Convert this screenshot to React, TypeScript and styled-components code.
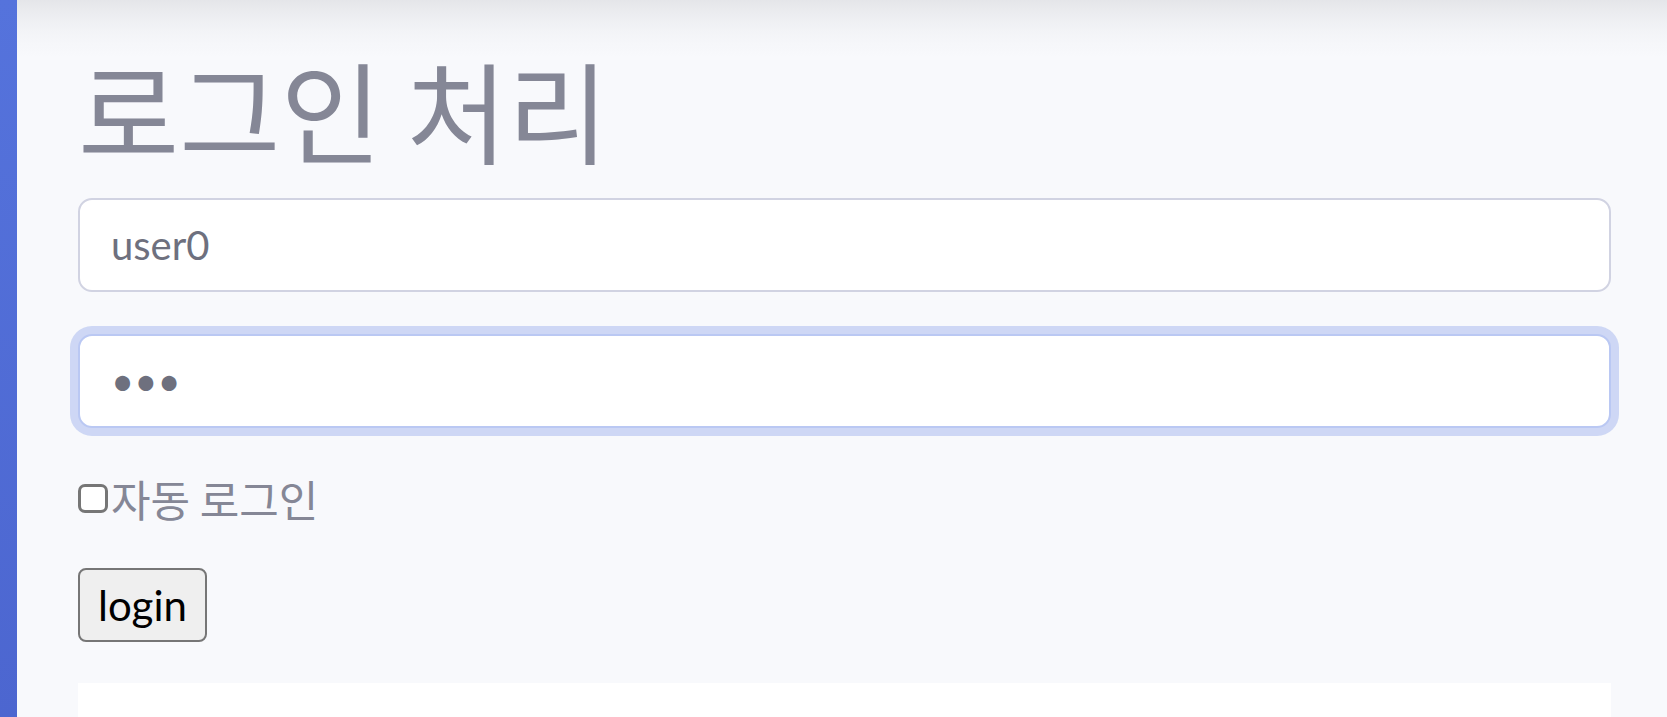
import React from "react";
import styled, { createGlobalStyle } from "styled-components";

const Global = createGlobalStyle`
  html, body, #root { margin: 0; padding: 0; height: 100%; }
  body {
    overflow: hidden;
    background: #f8f9fc;
    font-family: "Lato", "Noto Sans CJK KR", sans-serif;
  }
  * { box-sizing: border-box; }
`;

const Wrapper = styled.div`
  display: flex;
  min-height: 100vh;
`;

const Sidebar = styled.nav`
  width: 17px;
  flex: 0 0 17px;
  background: linear-gradient(180deg, #5573dc 0%, #4a63cd 100%);
`;

const Content = styled.main`
  flex: 1;
  background:
    linear-gradient(
      180deg,
      rgba(58, 59, 69, 0.1) 0px,
      rgba(58, 59, 69, 0.075) 10px,
      rgba(58, 59, 69, 0.05) 20px,
      rgba(58, 59, 69, 0.028) 32px,
      rgba(58, 59, 69, 0.012) 44px,
      rgba(58, 59, 69, 0) 58px
    ),
    #f8f9fc;
  padding: 42px 56px 0 61px;
  display: flex;
  flex-direction: column;
`;

const Title = styled.h1`
  margin: 0 0 24px;
  font-family: "Noto Sans CJK KR", "Lato", sans-serif;
  font-weight: 400;
  font-size: 110px;
  line-height: 132px;
  color: #858796;
`;

const Form = styled.form`
  display: flex;
  flex-direction: column;
`;

const Group = styled.div<{ $gap?: number }>`
  margin-bottom: ${(p) => p.$gap ?? 40}px;
`;

const TextInput = styled.input<{ $focused?: boolean }>`
  display: block;
  width: 100%;
  height: 94px;
  padding: 0 31px;
  font-family: "Lato", "Noto Sans CJK KR", sans-serif;
  font-size: 40px;
  color: #6e707e;
  background: #fff;
  border: 2px solid ${(p) => (p.$focused ? "#bac8f3" : "#d1d3e2")};
  border-radius: 14px;
  outline: none;
  caret-color: #6e707e;
  box-shadow: ${(p) => (p.$focused ? "0 0 0 8px rgba(78, 115, 223, 0.25)" : "none")};
  &:focus {
    border-color: #bac8f3;
    box-shadow: 0 0 0 8px rgba(78, 115, 223, 0.25);
  }
`;

const CheckLabel = styled.label`
  display: flex;
  align-items: center;
  height: 60px;
  font-family: "Noto Sans CJK KR", "Lato", sans-serif;
  font-size: 43px;
  color: #858796;
`;

const Check = styled.input`
  appearance: none;
  margin: 0 3px 0 0;
  width: 30px;
  height: 29px;
  border: 3px solid #767676;
  border-radius: 7px;
  background: #fff;
`;

const Button = styled.button`
  align-self: flex-start;
  height: 74px;
  padding: 0 18px;
  font-family: "Lato", sans-serif;
  font-size: 42px;
  color: #000;
  background: #efefef;
  border: 2px solid #767676;
  border-radius: 8px;
`;

const ResultBox = styled.section`
  margin-top: 41px;
  height: 200px;
  background: #fff;
`;

export default function App() {
  return (
    <>
      <Global />
      <Wrapper>
        <Sidebar />
        <Content>
          <Title>로그인 처리</Title>
          <Form onSubmit={(e) => e.preventDefault()}>
            <Group $gap={42}>
              <TextInput type="text" defaultValue="user0" />
            </Group>
            <Group>
              <TextInput type="password" defaultValue="abc" $focused autoFocus />
            </Group>
            <Group>
              <CheckLabel>
                <Check type="checkbox" />
                자동 로그인
              </CheckLabel>
            </Group>
            <Button type="submit">login</Button>
          </Form>
          <ResultBox />
        </Content>
      </Wrapper>
    </>
  );
}
